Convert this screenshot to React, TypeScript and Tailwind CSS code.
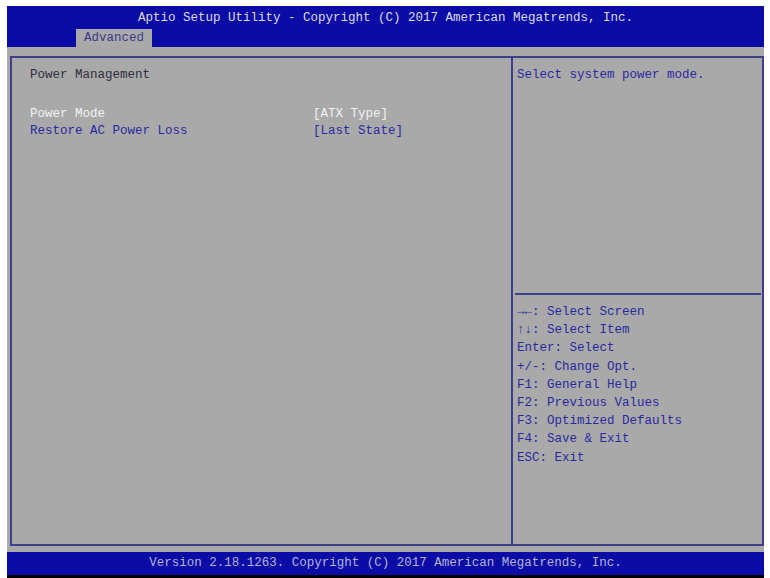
const helpLines = [
  "\u2192\u2190: Select Screen",
  "\u2191\u2193: Select Item",
  "Enter: Select",
  "+/-: Change Opt.",
  "F1: General Help",
  "F2: Previous Values",
  "F3: Optimized Defaults",
  "F4: Save & Exit",
  "ESC: Exit",
];

const mono = { fontFamily: '"Liberation Mono", "DejaVu Sans Mono", monospace' };

export default function App() {
  return (
    <div className="w-[770px] h-[578px] bg-white flex flex-col pt-[6px] pl-[7px] pr-[6px] overflow-hidden" style={mono}>
      {/* header */}
      <div className="h-[41px] bg-[#0b0ba6] flex flex-col">
        <div className="h-[23px] flex items-center justify-center text-[12.5px] text-[#dcdcec] pt-[2px]">
          Aptio Setup Utility - Copyright (C) 2017 American Megatrends, Inc.
        </div>
        <div className="flex-1 flex items-end pl-[69px]">
          <div className="w-[76px] h-[18px] bg-[#a9a9a9] text-[12.5px] text-[#3a3a88] flex items-center justify-center">
            Advanced
          </div>
        </div>
      </div>

      {/* body */}
      <div className="h-[505px] bg-[#a9a9a9] pt-[9px] pl-[3px] pb-[6px] flex">
        <div className="flex-1 flex border-2 border-[#3e3e8c]">
          <div className="w-[501px] border-r-2 border-[#3e3e8c] pl-[18px] pt-[9px] text-[12.5px]">
            <div className="leading-[17px] text-[#2e2e3e]">Power Management</div>
            <div className="mt-[22px] flex leading-[17px] text-[#f2f2f2]">
              <span className="w-[283px]">Power Mode</span>
              <span>[ATX Type]</span>
            </div>
            <div className="flex leading-[17px] text-[#2a2aa0]">
              <span className="w-[283px]">Restore AC Power Loss</span>
              <span>[Last State]</span>
            </div>
          </div>
          <div className="flex-1 flex flex-col text-[12.5px] text-[#2a2aa0]">
            <div className="h-[235px] pl-[4px] pt-[9px] leading-[17px]">Select system power mode.</div>
            <div className="ml-[2px] mr-[1px] h-[2px] bg-[#3e3e8c]" />
            <div className="pl-[4px] pt-[8px] flex flex-col">
              {helpLines.map((l) => (
                <div key={l} className="leading-[18.2px]">
                  {l}
                </div>
              ))}
            </div>
          </div>
        </div>
      </div>

      {/* footer */}
      <div className="h-[23px] bg-[#0b0ba6] flex items-center justify-center text-[12.5px] text-[#b4b4dc]">
        Version 2.18.1263. Copyright (C) 2017 American Megatrends, Inc.
      </div>
      <div className="flex-1 bg-black" />
    </div>
  );
}
